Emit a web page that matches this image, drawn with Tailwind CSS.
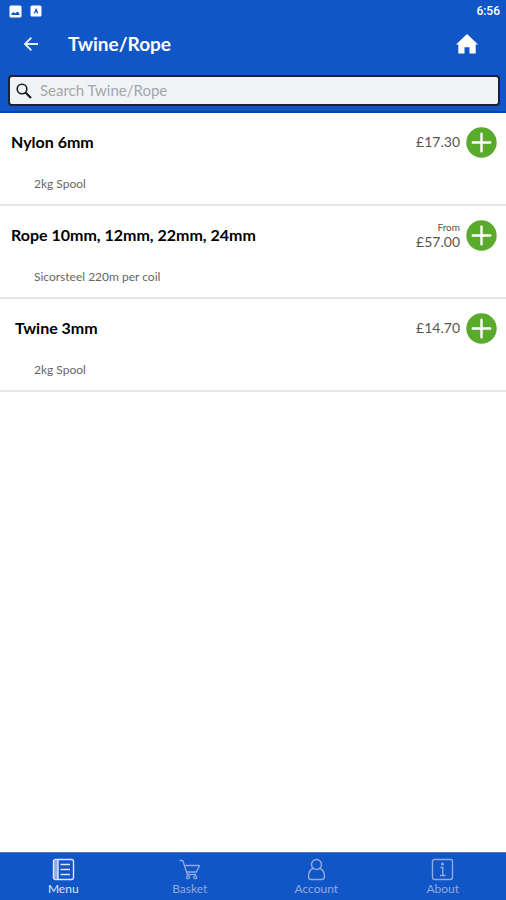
<!DOCTYPE html>
<html lang="en">
<head>
<meta charset="utf-8">
<meta name="viewport" content="width=device-width, initial-scale=1">
<title>Twine/Rope</title>
<script src="https://cdn.jsdelivr.net/npm/@tailwindcss/browser@4"></script>
</head>
<body class="flex min-h-screen flex-col bg-white font-['Lato','Open_Sans',sans-serif] text-black">
<header class="border-b-2 border-[#0444b8] bg-[#1056c6] text-white">
  <div class="flex h-[22px] items-center gap-2 pr-[6px] pl-[9px]">
    <svg class="size-[13px]" viewBox="0 0 13 13" aria-hidden="true"><rect x=".5" y=".5" width="12" height="12" rx="1.5" fill="#fff"/><path d="M2.500 10V8.500l2-1.500 1.500 1.500 2.500-2 2 2V10z" fill="#1056c6"/></svg>
    <svg class="size-[12px]" viewBox="0 0 12 12" aria-hidden="true"><rect x=".5" y=".5" width="11" height="11" rx="1.500" fill="#fff"/><path d="M3.800 8.500 5.800 3.500h.9l1.500 5H6.800V7.300H5.500l-.5 1.200z" fill="#1056c6"/></svg>
    <time class="ml-auto font-['Roboto',sans-serif] text-xs font-medium">6:56</time>
  </div>
  <div class="flex h-[44px] items-center pr-[28px] pl-[23px]">
    <button type="button" aria-label="Back" class="mr-[29px]"><svg class="size-4" viewBox="0 0 16 16" fill="none" stroke="#e6edfb" stroke-width="1.900"><path d="M15 8H2.500M8.300 1.700 2 8l6.300 6.300"/></svg></button>
    <h1 class="text-[19px] font-bold">Twine/Rope</h1>
    <button type="button" aria-label="Home" class="ml-auto"><svg class="h-5 w-[22px]" viewBox="0 0 22 20" fill="#fff"><path d="M11 0 0 10.500h2.300V19.500h6.200v-6.300h5v6.300h6.200v-9H22z"/></svg></button>
  </div>
  <div class="pt-[9px] pr-[6px] pb-[5px] pl-2">
    <label class="flex h-[31px] items-center gap-2 rounded-sm border-2 border-[#1b2430] bg-[#f0f4f7] px-[6px]">
      <svg class="size-4 shrink-0" viewBox="0 0 16 16" fill="none" stroke="#1c1c1c" stroke-width="1.600"><circle cx="6" cy="6" r="4.800"/><path d="m9.700 9.700 5.300 5.300" stroke-width="2.200"/></svg>
      <input type="search" aria-label="Search Twine/Rope" placeholder="Search Twine/Rope" class="min-w-0 flex-1 bg-transparent text-[15px] text-black outline-none placeholder:text-[#a3a6aa]">
    </label>
  </div>
</header>
<main class="flex-1">
  <ul>
    <li class="border-b-2 border-[#e6e6e6] pt-3 pr-[9px] pb-3 pl-[11px]">
      <div class="flex h-[34px] items-center">
        <h2 class="text-base font-bold">Nylon 6mm</h2>
        <p class="mr-[6px] ml-auto text-right text-sm leading-4 text-[#555]">£17.30</p>
        <button type="button" aria-label="Add Nylon 6mm"><svg class="size-[31px]" viewBox="0 0 31 31"><circle cx="15.500" cy="15.500" r="15.200" fill="#5aab2b"/><path d="M15.500 6.800v17.400M6.800 15.500h17.400" stroke="#fff" stroke-width="2.400" stroke-linecap="round"/></svg></button>
      </div>
      <p class="mt-[17px] pl-[23px] text-xs leading-4 text-[#666]">2kg Spool</p>
    </li>
    <li class="border-b-2 border-[#e6e6e6] pt-3 pr-[9px] pb-3 pl-[11px]">
      <div class="flex h-[34px] items-center">
        <h2 class="text-base font-bold">Rope 10mm, 12mm, 22mm, 24mm</h2>
        <p class="mr-[6px] ml-auto text-right text-sm leading-4 text-[#555]"><span class="block text-[10px] leading-[14px]">From</span>£57.00</p>
        <button type="button" aria-label="Add Rope 10mm, 12mm, 22mm, 24mm"><svg class="size-[31px]" viewBox="0 0 31 31"><circle cx="15.500" cy="15.500" r="15.200" fill="#5aab2b"/><path d="M15.500 6.800v17.400M6.800 15.500h17.400" stroke="#fff" stroke-width="2.400" stroke-linecap="round"/></svg></button>
      </div>
      <p class="mt-[17px] pl-[23px] text-xs leading-4 text-[#666]">Sicorsteel 220m per coil</p>
    </li>
    <li class="border-b-2 border-[#e6e6e6] pt-3 pr-[9px] pb-3 pl-[11px]">
      <div class="flex h-[34px] items-center">
        <h2 class="pl-1 text-base font-bold">Twine 3mm</h2>
        <p class="mr-[6px] ml-auto text-right text-sm leading-4 text-[#555]">£14.70</p>
        <button type="button" aria-label="Add Twine 3mm"><svg class="size-[31px]" viewBox="0 0 31 31"><circle cx="15.500" cy="15.500" r="15.200" fill="#5aab2b"/><path d="M15.500 6.800v17.400M6.800 15.500h17.400" stroke="#fff" stroke-width="2.400" stroke-linecap="round"/></svg></button>
      </div>
      <p class="mt-[17px] pl-[23px] text-xs leading-4 text-[#666]">2kg Spool</p>
    </li>
  </ul>
</main>
<nav class="grid h-[48px] grid-cols-4 border-t border-[#5577b5] bg-[#1056c6] text-xs leading-4 text-[#94a9dc]">
  <a href="#menu" aria-current="page" class="flex flex-col items-center pt-[5px] text-[#dfe6fa]">
    <svg class="size-[23px]" viewBox="0 0 23 23" fill="none" stroke="currentColor" stroke-width="1.400"><rect x="1.500" y="1.500" width="20" height="20" rx="2"/><path d="M2 2.500h4v18H2z" fill="currentColor" fill-opacity=".6" stroke="none"/><path d="M6 1.500v20M8.500 6.500h9.500M8.500 11.500h9.500M8.500 16.500h9.500"/></svg>
    Menu</a>
  <a href="#basket" class="flex flex-col items-center pt-[5px]">
    <svg class="size-[23px]" viewBox="0 0 23 23" fill="none" stroke="currentColor" stroke-width="1.300" stroke-linejoin="round"><path d="M1.500 2.500h3.300l4.500 14H18M6.300 7.500h15.200L18.500 14H8.500"/><circle cx="10" cy="19.300" r="1.500"/><circle cx="17.300" cy="19.300" r="1.500"/></svg>
    Basket</a>
  <a href="#account" class="flex flex-col items-center pt-[5px]">
    <svg class="size-[23px]" viewBox="0 0 23 23" fill="none" stroke="currentColor" stroke-width="1.400" stroke-linejoin="round"><circle cx="11.500" cy="6.500" r="5"/><path d="M8 10.500c-3 1.300-4.500 4.500-4.500 8 0 2 .8 3 2.500 3h11c1.700 0 2.500-1 2.500-3 0-3.500-1.500-6.700-4.500-8"/></svg>
    Account</a>
  <a href="#about" class="flex flex-col items-center pt-[5px]">
    <svg class="size-[23px]" viewBox="0 0 23 23" fill="none" stroke="currentColor" stroke-width="1.400"><rect x="1.500" y="1.500" width="20" height="20" rx="2"/><path d="M9.500 9.500h2.300v8M9 17.500h5.500"/><circle cx="11.500" cy="6" r=".8" fill="currentColor"/></svg>
    About</a>
</nav>
</body>
</html>
